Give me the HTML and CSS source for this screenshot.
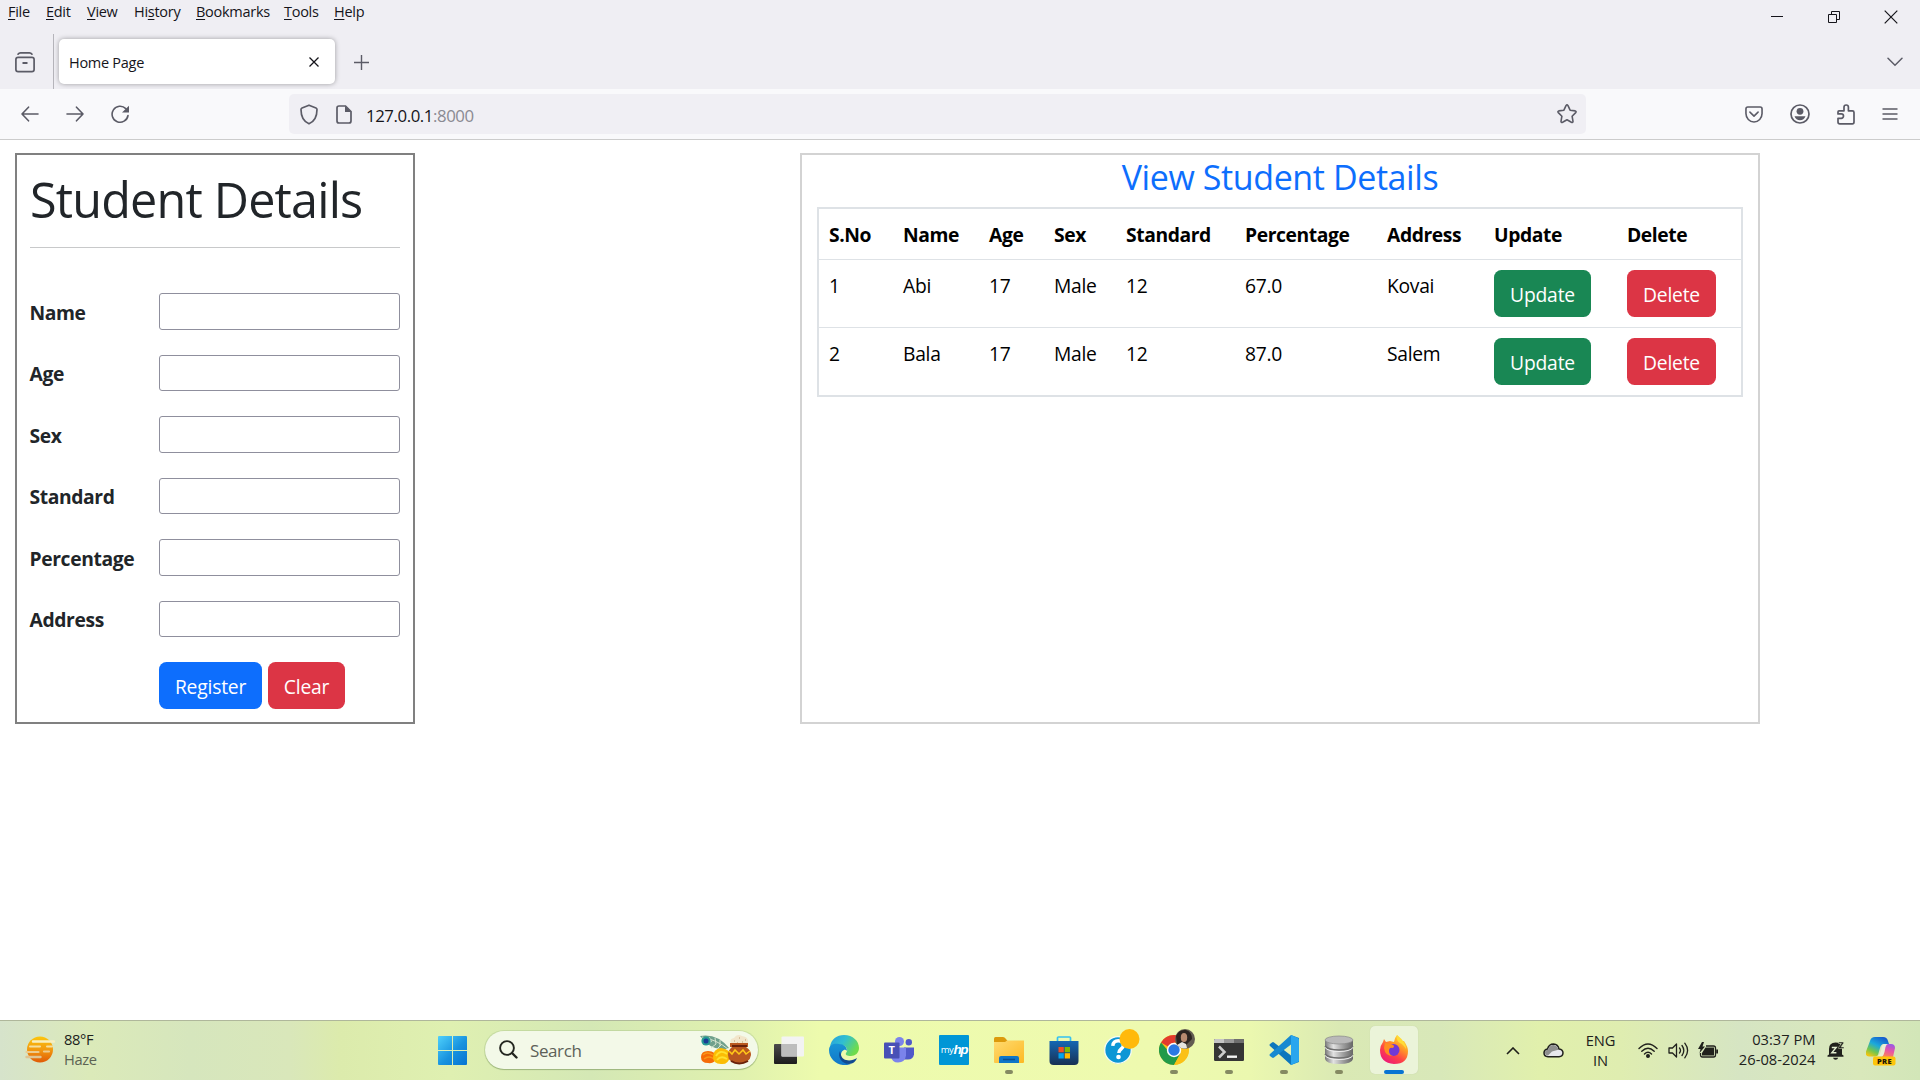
FILE: index.html
```html
<!DOCTYPE html>
<html lang="en">
<head>
<meta charset="utf-8">
<title>Home Page</title>
<link rel="stylesheet" href="styles.css">
</head>
<body>
<div class="screen">
  <header class="titlebar">
    <div class="menu-row">
      <nav class="menus">
        <span class="m-file"><u>F</u>ile</span><span class="m-edit"><u>E</u>dit</span><span class="m-view"><u>V</u>iew</span><span class="m-history">Hi<u>s</u>tory</span><span class="m-bookmarks"><u>B</u>ookmarks</span><span class="m-tools"><u>T</u>ools</span><span class="m-help"><u>H</u>elp</span>
      </nav>
      <div class="window-controls">
        <svg width="12" height="14" viewBox="0 0 12 14"><path d="M0 6.5h12" stroke="#15141a"/></svg>
        <svg width="12" height="12" viewBox="0 0 12 12" fill="none" stroke="#15141a"><path d="M.5 3.5h8v8h-8zM3.500 3.500V.5h8v8h-3"/></svg>
        <svg width="14" height="14" viewBox="0 0 14 14"><path d="M.7.7l12.600 12.600M13.300.7L.7 13.300" stroke="#15141a" stroke-width="1.200"/></svg>
      </div>
    </div>
    <div class="tab-row">
      <svg class="view-icon" width="20" height="21" viewBox="0 0 20 21" fill="none" stroke="#5b5b66" stroke-width="1.700"><path d="M3 2.200Q4 .9 5.500.9h9q1.500 0 2.500 1.300" stroke-linecap="round"/><rect x=".9" y="5.400" width="18.200" height="14.300" rx="2.200"/><path d="M7.500 11h5" stroke-width="2"/></svg>
      <span class="tab-separator"></span>
      <div class="tab"><span>Home Page</span>
        <svg width="10" height="10" viewBox="0 0 10 10"><path d="M.5.5l9 9M9.500.5l-9 9" stroke="#15141a" stroke-width="1.300"/></svg>
      </div>
      <svg class="new-tab" width="15" height="15" viewBox="0 0 15 15"><path d="M7.500 0v15M0 7.500h15" stroke="#5b5b66" stroke-width="1.400"/></svg>
      <svg class="all-tabs" width="16" height="10" viewBox="0 0 16 10" fill="none"><path d="M1 1.200l7 7 7-7" stroke="#5b5b66" stroke-width="1.500" stroke-linecap="round"/></svg>
    </div>
  </header>
  <div class="toolbar">
    <div class="nav-buttons">
      <svg width="18" height="16" viewBox="0 0 18 16" fill="none" stroke="#5b5b66" stroke-width="1.600" stroke-linecap="round" stroke-linejoin="round"><path d="M17 8H1M7.500 1.200L1 8l6.500 6.800"/></svg>
      <svg width="18" height="16" viewBox="0 0 18 16" fill="none" stroke="#5b5b66" stroke-width="1.600" stroke-linecap="round" stroke-linejoin="round"><path d="M1 8h16M10.500 1.200L17 8l-6.500 6.800"/></svg>
      <svg width="19" height="19" viewBox="0 0 19 19"><path d="M14.800 3.600A8 8 0 1 0 17 10.500" fill="none" stroke="#5b5b66" stroke-width="1.600" stroke-linecap="round"/><path d="M18 .8v6.700h-7z" fill="#5b5b66"/></svg>
    </div>
    <div class="url-bar">
      <svg width="18" height="21" viewBox="0 0 18 21" fill="none" stroke="#5b5b66" stroke-width="1.700" stroke-linejoin="round"><path d="M9 1.200l7 2.800q1 .4 1 1.500c0 7-2.500 12-8 14.300C3.500 17.500 1 12.500 1 5.500q0-1.100 1-1.500z"/></svg>
      <svg class="page-icon" width="16" height="19" viewBox="0 0 16 19"><path d="M3 1h6.500L15 6.500V16q0 2-2 2H3q-2 0-2-2V3q0-2 2-2z" fill="none" stroke="#5b5b66" stroke-width="1.700"/><path d="M9 1v6h6z" fill="#5b5b66"/></svg>
      <span class="url">127.0.0.1<span class="port">:8000</span></span>
      <svg class="star" width="20" height="20" viewBox="0 0 20 20" fill="none" stroke="#5b5b66" stroke-width="1.600" stroke-linejoin="round"><path d="M9 1.600q1-1.400 2 0l2.100 4.600 5.100.7q1.400.5.500 1.700l-3.600 3.600.9 5.200q-.1 1.600-1.600.9L10 15.800l-4.400 2.500q-1.500.7-1.600-.9l.9-5.200L1.300 8.600q-.9-1.200.5-1.700l5.100-.7z"/></svg>
    </div>
    <div class="tool-buttons">
      <svg width="18" height="17" viewBox="0 0 19 17" preserveAspectRatio="none" fill="none" stroke="#5b5b66" stroke-width="1.700" stroke-linecap="round" stroke-linejoin="round"><path d="M3 1h13q2 0 2 2v4.500a8.500 8.500 0 0 1-17 0V3q0-2 2-2zM5.200 6.200l4.300 4 4.300-4"/></svg>
      <svg width="20" height="20" viewBox="0 0 20 20"><circle cx="10" cy="10" r="9" fill="none" stroke="#5b5b66" stroke-width="1.700"/><circle cx="10" cy="7.300" r="3.400" fill="#5b5b66"/><path d="M4.500 12.300h11q-1.500 4-5.500 4t-5.500-4z" fill="#5b5b66"/></svg>
      <svg width="18" height="21" viewBox="0 0 18 21" fill="none" stroke="#5b5b66" stroke-width="1.700" stroke-linejoin="round"><path d="M2 6.800h5V3.200a2.200 2.200 0 0 1 4.400 0v3.600h4q1.600 0 1.600 1.600V18q0 1.800-1.600 1.800H2.800Q1 19.800 1 18v-3.700h3.300a2.200 2.200 0 0 0 0-4.400H1V8q0-1.200 1-1.200z"/></svg>
      <svg width="16" height="14" viewBox="0 0 16 14"><path d="M.5 2h15M.5 7h15M.5 12h15" stroke="#5b5b66" stroke-width="1.500"/></svg>
    </div>
  </div>

  <main class="page">
    <section class="form-card">
      <h1>Student Details</h1>
      <hr>
      <form class="student-form">
        <label for="f-name">Name</label><input id="f-name" type="text">
        <label for="f-age">Age</label><input id="f-age" type="text">
        <label for="f-sex">Sex</label><input id="f-sex" type="text">
        <label for="f-std">Standard</label><input id="f-std" type="text">
        <label for="f-per">Percentage</label><input id="f-per" type="text">
        <label for="f-addr">Address</label><input id="f-addr" type="text">
        <div class="form-actions"><button type="button" class="btn primary">Register</button><button type="button" class="btn danger clear">Clear</button></div>
      </form>
    </section>
    <section class="list-card">
      <h2>View Student Details</h2>
      <table>
        <colgroup><col class="c-no"><col class="c-name"><col class="c-age"><col class="c-sex"><col class="c-std"><col class="c-per"><col class="c-addr"><col class="c-upd"><col class="c-del"></colgroup>
        <thead><tr><th>S.No</th><th>Name</th><th>Age</th><th>Sex</th><th>Standard</th><th>Percentage</th><th>Address</th><th>Update</th><th>Delete</th></tr></thead>
        <tbody>
          <tr><td>1</td><td>Abi</td><td>17</td><td>Male</td><td>12</td><td>67.0</td><td>Kovai</td><td><button type="button" class="btn success">Update</button></td><td><button type="button" class="btn danger">Delete</button></td></tr>
          <tr><td>2</td><td>Bala</td><td>17</td><td>Male</td><td>12</td><td>87.0</td><td>Salem</td><td><button type="button" class="btn success">Update</button></td><td><button type="button" class="btn danger">Delete</button></td></tr>
        </tbody>
      </table>
    </section>
  </main>

  <footer class="taskbar">
    <div class="weather">
      <svg width="30" height="27" viewBox="0 0 30 27">
        <defs><linearGradient id="sun" x1="0" y1="0" x2="0" y2="1"><stop offset="0" stop-color="#fcc60e"/><stop offset=".5" stop-color="#f29a10"/><stop offset="1" stop-color="#e05a06"/></linearGradient></defs>
        <circle cx="15" cy="13.500" r="13" fill="url(#sun)"/>
        <path d="M11 5.500h18M22 5.500H8" stroke="#f7efc0" stroke-width="2.400" stroke-linecap="round"/><path d="M5 10.500h10M22 10.500h5" stroke="#f4dfa0" stroke-width="2" stroke-linecap="round"/><path d="M1.500 16h12M19 15.500h5" stroke="#eccb8e" stroke-width="2.200" stroke-linecap="round"/><path d="M1.500 21h14" stroke="#dfc491" stroke-width="2.400" stroke-linecap="round"/>
      </svg>
      <div class="weather-text"><span>88°F</span><span class="muted">Haze</span></div>
    </div>
    <div class="start">
      <svg width="29" height="29" viewBox="0 0 29 29"><defs><linearGradient id="win" x1="0" y1="0" x2="1" y2="1"><stop offset="0" stop-color="#4fd0fb"/><stop offset=".55" stop-color="#1792de"/><stop offset="1" stop-color="#0573d2"/></linearGradient></defs><path d="M1 0h13v14H0V1q0-1 1-1zM15 0h13q1 0 1 1v13H15zM0 15h14v14H1q-1 0-1-1zM15 15h14v13q0 1-1 1H15z" fill="url(#win)"/></svg>
    </div>
    <div class="search">
      <svg width="19" height="19" viewBox="0 0 19 19" fill="none" stroke="#23261f" stroke-linecap="round"><circle cx="8" cy="8" r="6.900" stroke-width="1.900"/><path d="M13 13l4.500 4.500" stroke-width="2.400"/></svg>
      <span>Search</span>
      <svg class="festive" width="53" height="31" viewBox="0 0 53 31">
        <path d="M1 2Q18-1 30 14L27 15Q12 17 1 2z" fill="#6fa08c"/><path d="M3 3Q18 6 29 15M10 3l2 4M16 4l1 6M21 6l0 6M7 10l6-3M12 14l5-4M18 15l4-4" stroke="#d6e4cf" stroke-width="1" fill="none"/><circle cx="7" cy="7" r="4.600" fill="#279a94"/><circle cx="7" cy="7" r="2.500" fill="#193c94"/>
        <path d="M2 23q0-6 7-6 8 0 8 7-1 6-8 5-7 0-7-6z" fill="#f56b08"/><path d="M4 21q4-4 10 0M5 25q5-4 10 0" stroke="#fa9618" stroke-width="1.500" fill="none"/>
        <path d="M14 23q0-8 8-9 10 1 9 9-2 8-9 7-8 0-8-7z" fill="#fbbd04"/><path d="M17 22q4-7 11-2M18 26q4-5 10-1" stroke="#ffe131" stroke-width="1.800" fill="none"/>
        <path d="M32 9q-2-4 3-5 3-5 8-2 7 1 6 7l-2 3H34z" fill="#f2e6cb"/><path d="M35 7h1M40 4h1M43 8h1M38 9h1M46 6h1" stroke="#cdb28b" stroke-width="1.500"/>
        <path d="M31 9h18v4h-2q5 3 5 8-1 8-12 8t-11-8q0-5 4-8h-2z" fill="#b9571f"/><path d="M33 12h15M32 27q8 5 17 0" stroke="#69210b" stroke-width="2" fill="none"/><path d="M30 17l3 3 3-4 4 4 4-4 3 4 4-3" stroke="#ffc719" stroke-width="1.500" fill="none"/>
      </svg>
    </div>
    <div class="apps">
      <div class="app"><svg width="30" height="30" viewBox="0 0 30 30"><defs><linearGradient id="tv" x1="0" y1="0" x2="0" y2="1"><stop offset="0" stop-color="#4b4b4b"/><stop offset="1" stop-color="#1c1c1c"/></linearGradient></defs><rect y="9" width="23" height="20" rx="1" fill="url(#tv)"/><rect x="7.500" y="1.500" width="22.500" height="20" rx="1" fill="#f3f3f3"/><path d="M7.500 9H23v12.500H7.500z" fill="#bdbdbd"/></svg></div>
      <div class="app"><svg width="30" height="30" viewBox="0 0 30 30"><defs><linearGradient id="e1" x1="0" y1="0" x2="1" y2=".5"><stop offset="0" stop-color="#269ee0"/><stop offset=".5" stop-color="#31bfd0"/><stop offset="1" stop-color="#6fdc4b"/></linearGradient><linearGradient id="e2" x1="0" y1="0" x2="0" y2="1"><stop offset="0" stop-color="#1894d6"/><stop offset="1" stop-color="#1277c8"/></linearGradient></defs><path d="M1 12C2 4 8 0 15 0c9 0 15 6 15 13 0 5-4 8-8 8-4 0-6-1-5-3 3-3 0-8-5-8-5-1-9 1-11 2z" fill="url(#e1)"/><path d="M0 15c0-6 6-7 10-6 5 0 8 3 8 7-2-3-6 0-6 4 0 6 6 9 10 9-10 4-22-3-22-14z" fill="url(#e2)"/><path d="M11 16c-3 6 2 13 9 13 4 0 7-3 8-6-6 4-15 3-16-3z" fill="#114a91"/></svg></div>
      <div class="app"><svg width="30" height="30" viewBox="0 0 30 30"><circle cx="15.500" cy="6.500" r="4.500" fill="#7b83eb"/><circle cx="24.800" cy="7.200" r="3.200" fill="#5059c9"/><path d="M20 12.500h10v7q-1 5-6 5h-4z" fill="#5059c9"/><path d="M9 12.500h13v8q-1 7-8 7-6 0-7-6z" fill="#7b83eb"/><rect y="7.500" width="15.500" height="16" rx="1" fill="#4850b6"/><text x="7.700" y="19.200" class="teams-t">T</text></svg></div>
      <div class="app"><svg width="30" height="30" viewBox="0 0 30 30"><rect width="30" height="30" rx="1" fill="#0096d6"/><text x="1.800" y="18" class="my-text">my</text><text x="14.500" y="18.500" class="hp-text">hp</text></svg></div>
      <div class="app running"><svg width="30" height="30" viewBox="0 0 30 30"><defs><linearGradient id="fo" x1="0" y1="0" x2="1" y2="1"><stop offset="0" stop-color="#ffda70"/><stop offset="1" stop-color="#fdb923"/></linearGradient></defs><path d="M0 3.500Q0 2 1.500 2H9q1.500 0 3 2l1.500 2v4H0z" fill="#dc9a0c"/><path d="M0 7h11l2-1.500h17V27q0 1-1 1H1q-1 0-1-1z" fill="url(#fo)"/><path d="M5 28v-5q0-2 2-2h16q2 0 2 2v5z" fill="#0f76c8"/><path d="M9 24.500h12" stroke="#0a4f92" stroke-width="1.500"/></svg></div>
      <div class="app"><svg width="30" height="30" viewBox="0 0 30 30"><defs><linearGradient id="st" x1="0" y1="0" x2="0" y2="1"><stop offset="0" stop-color="#1467b3"/><stop offset="1" stop-color="#183054"/></linearGradient></defs><path d="M8.500 6V2.800Q8.500 2 9.500 2h11q1 0 1 .8V6" fill="none" stroke="#35c1f1" stroke-width="1.700"/><path d="M.5 6h29v20q0 4-4 4h-21q-4 0-4-4z" fill="url(#st)"/><path d="M9.500 12h5.300v5.300H9.500z" fill="#f25022"/><path d="M15.700 12H21v5.300h-5.300z" fill="#7fba00"/><path d="M9.500 18.200h5.300v5.300H9.500z" fill="#00a4ef"/><path d="M15.700 18.200H21v5.300h-5.300z" fill="#ffb900"/></svg></div>
      <div class="app"><svg class="badged" width="36" height="36" viewBox="0 0 36 36"><circle cx="14" cy="21" r="13.300" fill="#0c96d5" stroke="#f8fcf4" stroke-width="1.300"/><path d="M8.800 16.800q.5-5 5.500-5t5 4.600c0 3.500-4.500 3.600-4.500 7.600" fill="none" stroke="#fff" stroke-width="3.400"/><circle cx="14.500" cy="28" r="2.300" fill="#fff"/><circle cx="25.500" cy="10" r="10" fill="#ffb90b"/></svg></div>
      <div class="app running"><svg class="badged" width="36" height="36" viewBox="0 0 36 36"><circle cx="15" cy="21" r="15" fill="#fbc116"/><path d="M15 21L2 13.500A15 15 0 0 1 28 13.500H15z" fill="#e33b2e"/><path d="M15 21H8.500L2 13.500A15 15 0 0 0 15 36l6.500-11.500z" fill="#229a49"/><path d="M15 14h13a15 15 0 0 1-13 22l6.500-11.500z" fill="#fbc116"/><circle cx="15" cy="21" r="7.200" fill="#fff"/><circle cx="15" cy="21" r="5.700" fill="#2b78e4"/><circle cx="26" cy="10" r="10" fill="#625b51"/><path d="M17 7q3-7 10-6 6 2 6 9l-6 6-4-1-5 1z" fill="#2c2321"/><ellipse cx="25" cy="8.500" rx="3.200" ry="4.500" fill="#b88970"/><path d="M18 16l5-3 4 2 1 4q-5 2-10-3z" fill="#e6e4e0"/></svg></div>
      <div class="app running"><svg width="30" height="30" viewBox="0 0 30 30"><rect y="4" width="30" height="22" rx="1.200" fill="#353535"/><path d="M0 8V5.200Q0 4 1.200 4H10v4z" fill="#c5c5c5"/><path d="M10 4h10v4H10z" fill="#999"/><path d="M20 4h8.800Q30 4 30 5.200V8H20z" fill="#6e6e6e"/><path d="M5 11.500l5.500 5.500L5 22.500" fill="none" stroke="#ccc" stroke-width="2.500"/><path d="M13 21.700h10" stroke="#f3f3f3" stroke-width="2.400"/></svg></div>
      <div class="app running"><svg width="30" height="30" viewBox="0 0 30 30"><path d="M22 0l8 3v24l-8 3L1 11q-1-1 0-2l2-1.500q1-.8 2 0L22 20.500z" fill="#0d77bd"/><path d="M22 0v9.500L5 22.500q-1 .8-2 0L1 21q-1-1 0-2z" fill="#1689d1"/><path d="M22 0l7 3q1 .5 1 1.500v21q0 1-1 1.500l-7 3z" fill="#29a6ee"/></svg></div>
      <div class="app running"><svg width="30" height="30" viewBox="0 0 30 30"><defs><linearGradient id="db"><stop offset="0" stop-color="#777"/><stop offset=".3" stop-color="#e2e2e2"/><stop offset=".65" stop-color="#9e9e9e"/><stop offset="1" stop-color="#666"/></linearGradient></defs><path d="M1 5v19q1 5 14 5t14-5V5z" fill="url(#db)"/><ellipse cx="15" cy="5" rx="14" ry="4" fill="#b9b9b9" stroke="#888" stroke-width=".7"/><path d="M1 11q3 4 14 4t14-4M1 19q3 4 14 4t14-4" fill="none" stroke="#6f6f6f" stroke-width="1.500"/><path d="M1 12.500q3 4 14 4t14-4M1 20.500q3 4 14 4t14-4" fill="none" stroke="#eee" stroke-width="1"/></svg></div>
      <div class="app active"><svg width="30" height="30" viewBox="0 0 30 30"><defs><linearGradient id="ff" x1=".85" y1="0" x2=".2" y2="1"><stop offset="0" stop-color="#fff044"/><stop offset=".35" stop-color="#ff9a26"/><stop offset=".65" stop-color="#ff4247"/><stop offset="1" stop-color="#e91580"/></linearGradient></defs><path d="M18 0q3 3 5 6l2 0q4 6 4 10 0 13-14 13Q1 28 1 15q0-4 3-8l1-3 2 3 4-1 4 1q1-5 3-7z" fill="url(#ff)"/><circle cx="14.500" cy="15" r="6" fill="#7139d5"/><path d="M6 8q5 0 8 2 2 1 0 3-4-1-4 3t4 5Q6 21 5 13z" fill="#ff8d20"/><path d="M18 0q9 7 9 14-3-5-6-6-4-2-3-8z" fill="#ffdc36"/></svg></div>
    </div>
    <div class="tray">
      <svg class="t-up" width="14" height="8" viewBox="0 0 14 8" fill="none"><path d="M1 7l6-6 6 6" stroke="#1e1f1a" stroke-width="1.600"/></svg>
      <svg class="t-cloud" width="21" height="15" viewBox="0 0 21 15"><path d="M5 13.800Q1 13.500 1 9.800 1.200 6.500 4.500 6 6 1 10.500 1q4.500.3 5.500 5 4 .5 4 4-.3 3.600-4 3.800z" fill="#e8e8ec" stroke="#20211c" stroke-width="1.500"/><path d="M2 9.500Q2 7 5 6.700 6.500 2 10.500 2q4 .5 4.800 4.700L9 8.500 5 12.500q-3-.3-3-3z" fill="#8e8f8e"/></svg>
      <div class="lang"><span>ENG</span><span>IN</span></div>
      <svg class="t-wifi" width="20" height="15" viewBox="0 0 20 15" fill="none" stroke="#20211c" stroke-width="1.400" stroke-linecap="round"><path d="M1 5.500q9-9 18 0M3.800 8.300q6.200-6 12.400 0M6.500 11q3.500-3.300 7 0"/><circle cx="10" cy="13" r="1.300" fill="#20211c"/></svg>
      <svg class="t-sound" width="21" height="17" viewBox="0 0 21 17" fill="none" stroke="#20211c" stroke-width="1.300" stroke-linecap="round" stroke-linejoin="round"><path d="M1 6v5h3.500L8.500 15V2L4.500 6zM11.500 6q2 2.500 0 5M14 3.500q3.600 5 0 10M16.800 1.200q5.600 7.300 0 14.600"/></svg>
      <svg class="t-batt" width="21" height="17" viewBox="0 0 21 17"><path d="M8 4h7.500q2 0 2 2v7q0 2-2 2h-11q-2 0-2-2v-2" fill="none" stroke="#20211c" stroke-width="1.300"/><path d="M7.500 5.500h8.500v8h-12v-2.500zM18.200 7.500H20v4h-1.800zM4 0L0 7h2.500L1.500 11 7 4.500H4.500L6 0z" fill="#20211c"/></svg>
      <div class="clock"><span>03:37 PM</span><span>26-08-2024</span></div>
      <svg class="t-bell" width="18" height="19" viewBox="0 0 18 19"><path d="M2 13.500V8q0-6.500 6.500-6.500 5.500 0 6.500 5.500v6.500l1.500 1v1.300H.5v-1.300zM6 16.800h5.200q-.6 2-2.600 2t-2.600-2z" fill="#20211c"/><path d="M4.800 6.500h4.400l-4.400 5.300h4.600" fill="none" stroke="#e3eed0" stroke-width="1.400"/><path d="M11.600 1h5v1.200L14 6h3v1.500h-5.400V6.300l2.800-3.800h-2.800z" fill="#20211c" stroke="#d9e7c0" stroke-width=".5"/></svg>
      <svg class="t-copilot" width="30" height="29" viewBox="0 0 30 29"><defs><linearGradient id="cp1" x1=".8" y1="0" x2=".2" y2="1"><stop offset="0" stop-color="#1555cc"/><stop offset=".45" stop-color="#1ba9dc"/><stop offset=".75" stop-color="#72c64d"/><stop offset="1" stop-color="#f3c510"/></linearGradient><linearGradient id="cp2" x1=".6" y1="0" x2=".3" y2="1"><stop offset="0" stop-color="#9c57e4"/><stop offset=".5" stop-color="#e955a5"/><stop offset="1" stop-color="#fb8753"/></linearGradient></defs><path d="M9 0h8q4 0 5 4l1 3h-5q-3 0-4 4l-2 7q-1 1.500-5 1.500H3q-4 0-3-5L4 4q1-4 5-4z" fill="url(#cp1)"/><path d="M18 7h4l-4 12h-6q2-1 3-5l1-5q.5-2 2-2z" fill="#e9f0d5"/><path d="M22 7h3q4 0 4 4l-2 9H16q1.500-1 2.500-5l1-5q1-3 2.500-3z" fill="url(#cp2)"/><rect x="7" y="19.500" width="22.500" height="9" rx="2" fill="#fdc50b"/><text x="18.500" y="27" class="pre-text">PRE</text></svg>
    </div>
  </footer>
</div>
</body>
</html>
```
FILE: styles.css
```css
* { box-sizing: border-box; }
body { margin: 0; font-family: "Open Sans", "Noto Sans", sans-serif; background: #fff; overflow: hidden; }
svg { display: block; flex: none; }
.screen { width: 1920px; height: 1080px; display: flex; flex-direction: column; }

/* Browser chrome */
.titlebar { height: 89px; background: #efeef3; display: flex; flex-direction: column; color: #15141a; font-size: 14.5px; letter-spacing: -0.28px; }
.menu-row { height: 34px; display: flex; justify-content: space-between; }
.menus { display: flex; padding-left: 8px; line-height: 20px; margin-top: 2px; white-space: nowrap; }
.menus u { text-underline-offset: 2px; text-decoration-thickness: 1px; }
.m-file { width: 38px; }
.m-edit { width: 41px; }
.m-view { width: 47px; }
.m-history { width: 62px; }
.m-bookmarks { width: 88px; }
.m-tools { width: 50px; }
.window-controls { display: flex; align-items: center; gap: 44px; padding-right: 22px; }
.window-controls svg:first-child { margin-right: 1px; }
.tab-row { height: 55px; display: flex; align-items: center; padding: 0 17px 0 15px; }
.view-icon { margin-top: 2px; }
.tab-separator { width: 1px; height: 55px; background: #b5b4ba; margin: 0 5px 0 18px; }
.tab { width: 276px; height: 45px; background: #fff; border-radius: 5px; box-shadow: 0 0 5px rgba(0,0,0,.35); display: flex; align-items: center; justify-content: space-between; padding: 0 16px 0 10px; }
.tab span { padding-top: 2px; }
.new-tab { margin-left: 19px; margin-top: 2px; }
.all-tabs { margin-left: auto; }

.toolbar { height: 51px; background: #f9f9fb; border-bottom: 1px solid #ccc; display: flex; align-items: center; padding-right: 22px; }
.nav-buttons { width: 289px; display: flex; align-items: center; gap: 27px; padding-left: 21px; }
.url-bar { width: 1297px; height: 40px; background: #f0eff4; border-radius: 5px; display: flex; align-items: center; padding: 0 9px 0 11px; }
.page-icon { margin-left: 18px; }
.url { margin-left: 14px; font-size: 16.800px; letter-spacing: -0.42px; color: #15141a; padding-top: 2px; }
.port { color: #8a8a92; }
.star { margin-left: auto; }
.tool-buttons { margin-left: auto; display: flex; align-items: center; gap: 27px; }

/* Web page */
.page { height: 880px; padding: 13px 160px 0 15px; display: flex; justify-content: space-between; align-items: flex-start; color: #212529; }
.form-card { width: 400px; height: 571px; border: 2px solid gray; padding: 14px 13px 12px; }
h1 { margin: 0; font-weight: 400; font-size: 48.500px; line-height: 60px; letter-spacing: -0.8px; white-space: nowrap; }
hr { margin: 18px 0 45px; border: 0; border-top: 1px solid #c8c9ca; }
.student-form { display: grid; grid-template-columns: 129px 241px; row-gap: 25px; align-items: center; }
.student-form label { font-weight: 700; font-size: 19.300px; letter-spacing: -0.38px; line-height: 30px; padding-top: 3px; margin-left: -0.500px; }
.student-form input { width: 241px; height: 36.500px; border: 1px solid #8f8f9d; border-radius: 3px; background: #fff; padding: 0; }
.form-actions { grid-column: 2; display: flex; gap: 6px; }
.btn { height: 47px; border: 0; border-radius: 7.500px; color: #fff; font: 400 19.300px/30px "Open Sans", "Noto Sans", sans-serif; letter-spacing: -0.2px; padding: 2px 0 0; display: block; text-align: center; }
.primary { width: 103px; background: #0d6efd; }
.danger { width: 89px; background: #dc3545; }
.clear { width: 77px; }
.success { width: 97px; background: #198754; }
.list-card { width: 960px; height: 571px; border: 2px solid #d3d3d3; padding: 1px 15px 0; }
h2 { margin: 0 0 9px; font-weight: 400; font-size: 34px; line-height: 42px; letter-spacing: -0.4px; color: #0d6efd; text-align: center; }
table { width: 926px; table-layout: fixed; border-collapse: separate; border-spacing: 0; border: 2px solid #dee2e6; color: #000; font-size: 19.300px; line-height: 30px; letter-spacing: -0.3px; }
th, td { padding: 11px 10px 9px; text-align: left; vertical-align: top; white-space: nowrap; }
th { height: 51px; font-weight: 700; letter-spacing: -0.4px; border-bottom: 1px solid #dee2e6; }
td { height: 68px; border-bottom: 1px solid #dee2e6; }
td .btn { margin-top: -1px; }
tbody tr:last-child td { height: 67px; border-bottom: 0; }
.c-no { width: 74px; }
.c-name { width: 86px; }
.c-age { width: 65px; }
.c-sex { width: 72px; }
.c-std { width: 119px; }
.c-per { width: 142px; }
.c-addr { width: 107px; }
.c-upd { width: 133px; }
.c-del { width: 124px; }

/* Taskbar */
.taskbar { height: 60px; border-top: 1px solid #afb79b; display: flex; align-items: center; color: #20211c; font-size: 14.700px; letter-spacing: -0.2px; background: linear-gradient(90deg, #d6e3cb 0, #dbeab9 90px, #d6e6bd 190px, #d9e7ba 290px, #dcebac 340px, #dff0b1 450px, #d4e8b5 590px, #e0f1ae 740px, #edfbad 820px, #eefaaf 1150px, #ebf8af 1250px, #dae9b4 1340px, #d8e8b9 1440px, #e1f0ac 1540px, #dfedb0 1620px, #d6e5c3 1740px, #d9e8bb 1860px, #d2e6b8 1920px); }
.weather { width: 438px; display: flex; align-items: center; gap: 9px; padding-left: 25px; }
.weather svg { margin-top: -2px; }
.weather-text { letter-spacing: -0.4px; }
.weather-text, .lang, .clock { display: flex; flex-direction: column; line-height: 20px; margin-top: -3px; }
.lang { margin-top: -2px; }
.muted { color: #5c6353; }
.start { width: 47px; }
.search { width: 273px; height: 38px; margin-top: -2px; border-radius: 19px; background: #f3f9e8; box-shadow: 0 0 0 1px rgba(150,180,120,.3), 0 1px 1px rgba(80,110,50,.4); display: flex; align-items: center; padding: 0 6px 0 14px; }
.search span { margin-left: 12px; padding-top: 2px; font-size: 17px; letter-spacing: -0.4px; color: #5d6158; }
.festive { margin-left: auto; }
.apps { display: flex; margin-left: 3.500px; }
.app { width: 55px; height: 48px; margin-top: -1px; position: relative; display: flex; align-items: center; justify-content: center; }
.badged { margin: -6px 0 0 6px; }
.running::after, .active::after { content: ""; position: absolute; bottom: 0; left: 23.500px; width: 8px; height: 4px; border-radius: 2px; background: #858a62; }
.active { width: 48px; margin-left: 3.500px; margin-right: 3.500px; border-radius: 5px; background: #ebf4d9; box-shadow: 0 0 1px #bccaa0; }
.active::after { left: 14px; width: 20px; background: #0874d2; }
.teams-t { font: 700 11px "Open Sans", sans-serif; fill: #fff; text-anchor: middle; letter-spacing: 0; }
.my-text { font: 400 9.500px "Open Sans", sans-serif; fill: #fff; letter-spacing: -0.5px; }
.hp-text { font: italic 700 13.500px "Liberation Sans Narrow", "Liberation Sans", sans-serif; fill: #fff; letter-spacing: -1.500px; }
.tray { display: flex; align-items: center; margin-left: 84px; height: 56px; }
.t-cloud { margin-left: 23px; }
.lang { width: 40px; margin-left: 17px; align-items: center; }
.t-wifi { margin-left: 17px; }
.t-sound { margin-left: 10px; }
.t-batt { margin-left: 9px; }
.clock { width: 97px; align-items: flex-end; white-space: nowrap; letter-spacing: 0; }
.t-bell { margin-left: 11px; }
.t-copilot { margin-left: 21px; margin-top: 2px; }
.pre-text { font: 800 7.500px "Open Sans", sans-serif; fill: #1c1807; text-anchor: middle; letter-spacing: .3px; }
```
